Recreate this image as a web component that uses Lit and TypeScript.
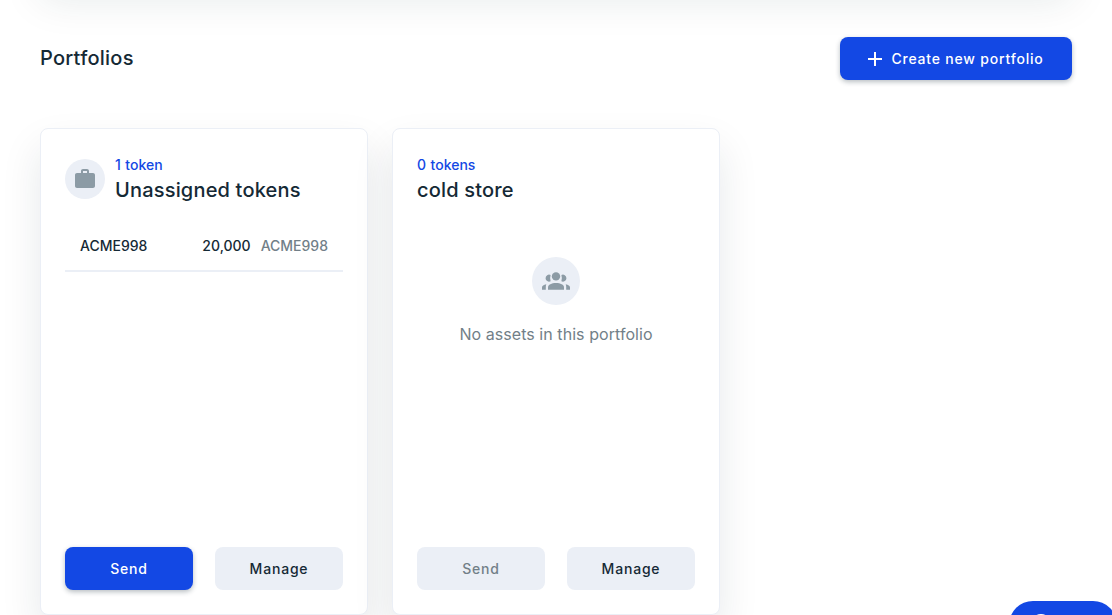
import { LitElement, html, css, svg, nothing } from "lit";
import { customElement, property } from "lit/decorators.js";
import { classMap } from "lit/directives/class-map.js";

interface Token {
  name: string;
  amount: string;
  ticker: string;
}

const plusIcon = svg`<path d="M19 13h-6v6h-2v-6H5v-2h6V5h2v6h6v2z" />`;
const caseIcon = svg`<path d="M20 6h-4V4c0-1.11-.89-2-2-2h-4c-1.11 0-2 .89-2 2v2H4c-1.11 0-2 .89-2 2v11c0 1.11.89 2 2 2h16c1.11 0 2-.89 2-2V8c0-1.11-.89-2-2-2zm-6 0h-4V4h4v2z" />`;

@customElement("ui-button")
class UiButton extends LitElement {
  @property() variant = "primary";
  @property({ type: Boolean }) disabled = false;

  static styles = css`
    :host {
      display: block;
    }
    .button {
      display: flex;
      align-items: center;
      justify-content: center;
      box-sizing: border-box;
      width: 100%;
      height: 43px;
      padding: 0;
      border: 0;
      border-radius: 8px;
      font: 500 14px/20px Inter, sans-serif;
      letter-spacing: 0.8px;
      white-space: nowrap;
    }
    .primary {
      background: #1348e4;
      color: #fff;
      box-shadow: 0 2px 5px rgba(21, 41, 53, 0.3);
    }
    .secondary {
      background: #ebeff6;
      color: #152935;
    }
    .disabled {
      color: #727f88;
    }
  `;

  render() {
    const classes = {
      button: true,
      primary: this.variant === "primary",
      secondary: this.variant === "secondary",
      disabled: this.disabled,
    };
    return html`<button class=${classMap(classes)} ?disabled=${this.disabled}><slot></slot></button>`;
  }
}

@customElement("portfolio-card")
class PortfolioCard extends LitElement {
  @property() name = "";
  @property({ attribute: false }) tokens: Token[] = [];
  @property({ type: Boolean }) unassigned = false;

  static styles = css`
    :host {
      display: flex;
      flex-direction: column;
      box-sizing: border-box;
      width: 328px;
      height: 487px;
      padding: 24px;
      border: 1px solid #ebeff6;
      border-radius: 8px;
      background: #fff;
      box-shadow: 0 20px 40px rgba(21, 41, 53, 0.1);
    }
    .head {
      display: flex;
      align-items: center;
      gap: 10px;
      height: 52px;
    }
    .avatar {
      display: flex;
      align-items: center;
      justify-content: center;
      width: 40px;
      height: 40px;
      border-radius: 50%;
      background: #ebeff6;
      fill: #8c9ba5;
    }
    .count {
      font-size: 14px;
      font-weight: 500;
      line-height: 22px;
      color: #1348e4;
      word-spacing: 0.8px;
    }
    .name {
      font-size: 20px;
      font-weight: 500;
      line-height: 28px;
      letter-spacing: 0.18px;
    }
    .row {
      display: flex;
      gap: 10px;
      margin-top: 15px;
      padding: 15px 15px 13px;
      border-bottom: 2px solid #ebeff6;
      font-size: 14px;
      font-weight: 500;
      line-height: 22px;
    }
    .amount {
      margin-left: auto;
    }
    .ticker {
      color: #727f88;
    }
    .empty {
      display: flex;
      flex-direction: column;
      align-items: center;
      gap: 16px;
      margin-top: 52px;
      font-size: 16px;
      line-height: 26px;
      letter-spacing: 0.06px;
      color: #727f88;
    }
    .empty .avatar {
      width: 48px;
      height: 48px;
    }
    .actions {
      display: grid;
      grid-template-columns: 1fr 1fr;
      gap: 22px;
      margin-top: auto;
    }
  `;

  render() {
    const n = this.tokens.length;
    return html`
      <div class="head">
        ${this.unassigned
          ? html`<div class="avatar"><svg width="24" height="24" viewBox="0 0 24 24">${caseIcon}</svg></div>`
          : nothing}
        <div>
          <div class="count">${n} ${n === 1 ? "token" : "tokens"}</div>
          <div class="name">${this.name}</div>
        </div>
      </div>
      ${n
        ? this.tokens.map(
            (t) => html`<div class="row">
              <span>${t.name}</span><span class="amount">${t.amount}</span><span class="ticker">${t.ticker}</span>
            </div>`
          )
        : html`<div class="empty">
            <div class="avatar">
              <svg width="28" height="18" viewBox="0 0 28 18">
                <circle cx="14" cy="4.4" r="4.2" />
                <path d="M6 17.8v-2.400c0-2.700 3.600-4.300 8-4.300s8 1.600 8 4.300v2.400z" />
                <path d="M8.600 3a3.500 3.500 0 1 0 0 6.300q-1-3 0-6.300zM19.400 3a3.500 3.500 0 1 1 0 6.300q1-3 0-6.300z" />
                <path d="M4.300 12.200C1.700 12.600 0 13.800 0 15.500v2.300h3.800v-2.600c0-1.100.1-2.100.5-3zM23.700 12.200c2.600.4 4.300 1.600 4.300 3.300v2.300h-3.800v-2.600c0-1.100-.1-2.100-.5-3z" />
              </svg>
            </div>
            <div>No assets in this portfolio</div>
          </div>`}
      <div class="actions">
        <ui-button variant=${n ? "primary" : "secondary"} ?disabled=${!n}>Send</ui-button>
        <ui-button variant="secondary">Manage</ui-button>
      </div>
    `;
  }
}

@customElement("app-root")
class AppRoot extends LitElement {
  static styles = css`
    :host {
      display: block;
      position: relative;
      box-sizing: border-box;
      height: 615px;
      padding: 0 40px;
      overflow: hidden;
      background: #fff;
      color: #152935;
      font-family: Inter, sans-serif;
    }
    .panel {
      height: 100px;
      margin-top: -120px;
      border-radius: 8px;
      box-shadow: 0 20px 40px rgba(21, 46, 46, 0.1);
    }
    .bar {
      display: flex;
      align-items: center;
      justify-content: space-between;
      height: 43px;
      margin: 57px 0 48px;
    }
    .title {
      margin: 0;
      padding-bottom: 2px;
      font-size: 20px;
      font-weight: 500;
      line-height: 28px;
      letter-spacing: 0.25px;
    }
    .create {
      width: 232px;
    }
    .plus {
      margin-right: 4px;
      fill: #fff;
    }
    .label {
      margin-right: 5px;
    }
    .cards {
      display: flex;
      gap: 24px;
    }
    .chat {
      position: absolute;
      left: 1009px;
      top: 601px;
      display: flex;
      justify-content: flex-start;
      box-sizing: border-box;
      width: 108px;
      height: 48px;
      padding: 13px 22px;
      border-radius: 24px;
      background: #1348e4;
    }
  `;

  render() {
    return html`
      <div class="panel"></div>
      <div class="bar">
        <h2 class="title">Portfolios</h2>
        <ui-button class="create"
          ><svg class="plus" width="24" height="24" viewBox="0 0 24 24">${plusIcon}</svg
          ><span class="label">Create new portfolio</span></ui-button
        >
      </div>
      <div class="cards">
        <portfolio-card
          name="Unassigned tokens"
          unassigned
          .tokens=${[{ name: "ACME998", amount: "20,000", ticker: "ACME998" }]}
        ></portfolio-card>
        <portfolio-card name="cold store"></portfolio-card>
      </div>
      <div class="chat">
        <svg width="20" height="20" viewBox="0 0 20 20" fill="none" stroke="#fff" stroke-width="2">
          <circle cx="10" cy="10" r="9" />
        </svg>
      </div>
    `;
  }
}
